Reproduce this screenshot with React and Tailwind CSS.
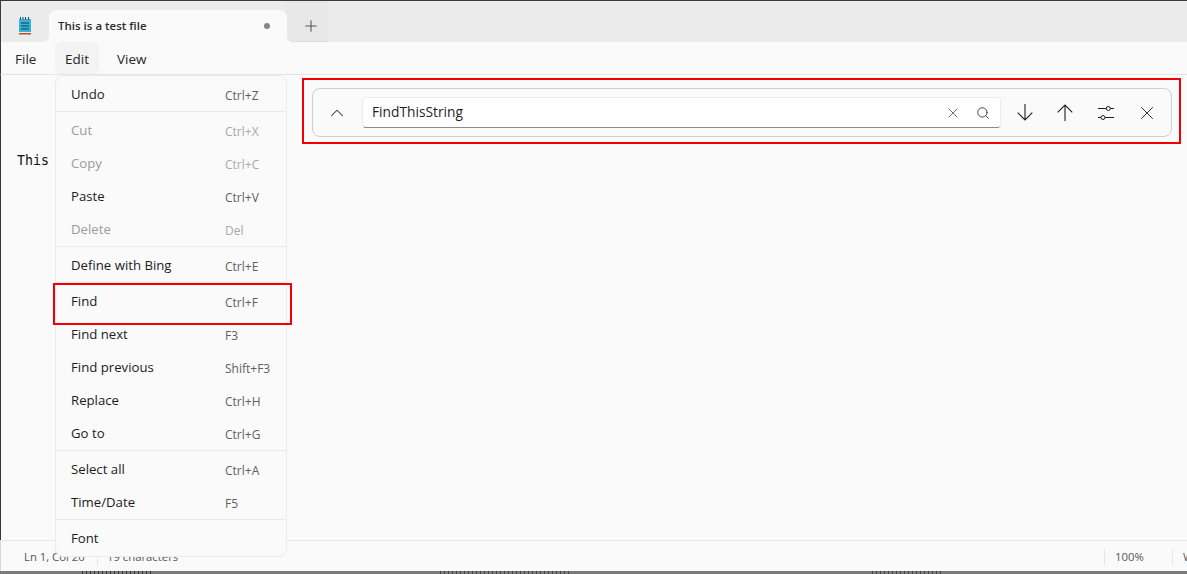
import React from "react";
import { ChevronUp, X, Search, Plus } from "lucide-react";

const menuGroups = [
  [{ label: "Undo", keys: "Ctrl+Z" }],
  [
    { label: "Cut", keys: "Ctrl+X", disabled: true },
    { label: "Copy", keys: "Ctrl+C", disabled: true },
    { label: "Paste", keys: "Ctrl+V" },
    { label: "Delete", keys: "Del", disabled: true },
  ],
  [{ label: "Define with Bing", keys: "Ctrl+E" }],
  [
    { label: "Find", keys: "Ctrl+F" },
    { label: "Find next", keys: "F3" },
    { label: "Find previous", keys: "Shift+F3" },
    { label: "Replace", keys: "Ctrl+H" },
    { label: "Go to", keys: "Ctrl+G" },
  ],
  [
    { label: "Select all", keys: "Ctrl+A" },
    { label: "Time/Date", keys: "F5" },
  ],
  [{ label: "Font" }],
];

function NotepadIcon() {
  return (
    <svg width="14" height="18" viewBox="0 0 14 18">
      <rect x="1" y="2" width="12" height="13" fill="#35b4d8" />
      <path d="M2.5 0v2.5M5 0v2.5M7.5 0v2.5M10.5 0v2.5" stroke="#1f3f57" strokeWidth="1" />
      <path d="M3 6h8M3 9h8M3 12h8" stroke="#123f5c" strokeWidth="1.2" />
      <rect x="1" y="16" width="12" height="1.5" fill="#b5521b" />
    </svg>
  );
}

function SlidersIcon() {
  return (
    <svg width="16" height="14" viewBox="0 0 16 14" fill="none" stroke="#1f1f1f" strokeWidth="1">
      <path d="M0 2.5h8.3M12.3 2.5H16M0 11.5h3M7 11.5h9" />
      <circle cx="10.3" cy="2.5" r="2" />
      <circle cx="5" cy="11.5" r="2" />
    </svg>
  );
}

function ArrowIcon({ up }) {
  return (
    <svg width="16" height="17" viewBox="0 0 16 17" fill="none" stroke="#1f1f1f" strokeWidth="1.1" className={up ? "rotate-180" : ""}>
      <path d="M8 0v16M0.7 8.7L8 16l7.3-7.3" />
    </svg>
  );
}

function MenuRow({ label, keys, disabled }) {
  return (
    <div className="flex h-[33px] items-center pl-[15px]">
      <span className={`w-[154px] text-[13.2px] ${disabled ? "text-[#9b9b9b]" : "text-[#1c1c1c]"}`}>{label}</span>
      {keys && (
        <span className={`pt-[3px] text-[12px] ${disabled ? "text-[#a8a8a8]" : "text-[#5f5f5f]"}`}>{keys}</span>
      )}
    </div>
  );
}

export default function App() {
  return (
    <div
      className="relative flex h-[574px] w-[1187px] flex-col overflow-hidden border-t border-[#3a3a3a] bg-[#fafafa]"
      style={{ fontFamily: '"Open Sans", "Noto Sans", sans-serif' }}
    >
      {/* Tab strip */}
      <div className="flex h-[41px] border-l border-[#3a3a3a]">
        <div className="flex w-[48px] items-center justify-center rounded-br-md bg-[#ebebeb] pt-[9px]">
          <NotepadIcon />
        </div>
        <div className="flex w-[238px] items-end bg-[linear-gradient(#ebebeb_60%,#fafafa_60%)]">
          <div className="flex h-[32px] w-full items-center justify-between rounded-t-lg bg-[#fafafa] pr-[17px] pl-[9px] text-[11.5px] font-semibold text-[#2a2a2a]">
            <span>This is a test file</span>
            <span className="h-[6px] w-[6px] rounded-full bg-[#858585]" />
          </div>
        </div>
        <div className="flex w-[41px] items-center justify-center rounded-bl-md border-b border-[#dcdcdc] bg-[#e8e8e8] pt-[9px] pl-[7px]">
          <Plus size={18} strokeWidth={1.4} color="#555" />
        </div>
        <div className="flex-1 bg-[#ebebeb]" />
      </div>

      {/* Menu bar */}
      <div className="flex h-[33px] border-b border-l border-[#e5e5e5] border-l-[#3a3a3a] pl-[14px] text-[13.5px] leading-[34px] text-[#262626]">
        <span className="w-[40px]">File</span>
        <span className="w-[44px] rounded-md bg-[#f3f3f3] pl-[10px]">Edit</span>
        <span className="ml-[18px]">View</span>
      </div>

      {/* Editor */}
      <div className="flex-1 border-l border-[#3a3a3a] pt-[72px] pl-[16px]">
        <span className="text-[13.3px] leading-[18px] text-[#111]" style={{ fontFamily: '"DejaVu Sans Mono", monospace' }}>
          This
        </span>
      </div>

      {/* Status bar */}
      <div className="flex h-[31px] items-center border-t border-l border-[#e5e5e5] border-l-[#d8d8d8] pt-[2px] text-[11.3px] text-[#555]">
        <span className="w-[96px] pl-[23px]">Ln 1, Col 20</span>
        <span className="h-[18px] border-l border-[#e5e5e5] pl-[9px] leading-[18px]">19 characters</span>
        <div className="ml-auto flex h-[18px] items-center">
          <span className="w-[68px] border-l border-[#e5e5e5] pl-[10px]">100%</span>
          <span className="w-[15px] border-l border-[#e5e5e5] pl-[10px] whitespace-nowrap">W</span>
        </div>
      </div>

      {/* Window edge, with the tops of whatever sits behind it */}
      <div className="flex h-[3px] bg-[#7b7b7b]">
        <div className="ml-[82px] w-[70px] bg-[repeating-linear-gradient(90deg,#333_0_1px,transparent_1px_4px)]" />
        <div className="ml-[288px] w-[130px] bg-[repeating-linear-gradient(90deg,#444_0_1px,transparent_1px_4px)]" />
        <div className="ml-[302px] w-[70px] bg-[repeating-linear-gradient(90deg,#444_0_1px,transparent_1px_4px)]" />
      </div>

      {/* Edit menu */}
      <div className="absolute top-[74px] left-[55px] w-[232px] rounded-lg border border-[#ebebeb] bg-[#fafafa] pt-[2px] pb-[1px]">
        {menuGroups.map((group, i) => (
          <div key={i} className={i < menuGroups.length - 1 ? "mb-[2px] border-b border-[#e8e8e8]" : ""}>
            {group.map((item) => (
              <MenuRow key={item.label} {...item} />
            ))}
          </div>
        ))}
      </div>

      {/* Find bar */}
      <div className="absolute top-[87px] left-[312px] flex h-[49px] w-[860px] items-center rounded-lg border border-[#cfcfcf] bg-[#fafafa]">
        <div className="flex w-[49px] justify-center pr-[2px]">
          <ChevronUp size={22} strokeWidth={1.1} color="#333" />
        </div>
        <div className="flex h-[31px] w-[639px] items-center rounded-[4px] border border-[#ececec] border-b-[#8c8c8c] bg-white pr-[10px] pl-[9px] text-[13.75px] text-[#1f1f1f]">
          <span className="flex-1">FindThisString</span>
          <X size={16} strokeWidth={1.4} color="#666" />
          <Search size={14} strokeWidth={1.7} color="#444" className="ml-[15px]" />
        </div>
        <div className="ml-[4px] flex items-center">
          <div className="flex w-[40px] justify-center"><ArrowIcon /></div>
          <div className="flex w-[40px] justify-center"><ArrowIcon up /></div>
          <div className="flex w-[41px] justify-center"><SlidersIcon /></div>
          <div className="flex w-[42px] justify-center"><X size={22} strokeWidth={1} color="#1f1f1f" /></div>
        </div>
      </div>

      {/* Red annotation boxes */}
      <div className="absolute top-[77px] left-[302px] h-[66px] w-[879px] border-2 border-[#f00000]" />
      <div className="absolute top-[282px] left-[53px] h-[42px] w-[239px] border-2 border-[#f00000]" />
    </div>
  );
}
